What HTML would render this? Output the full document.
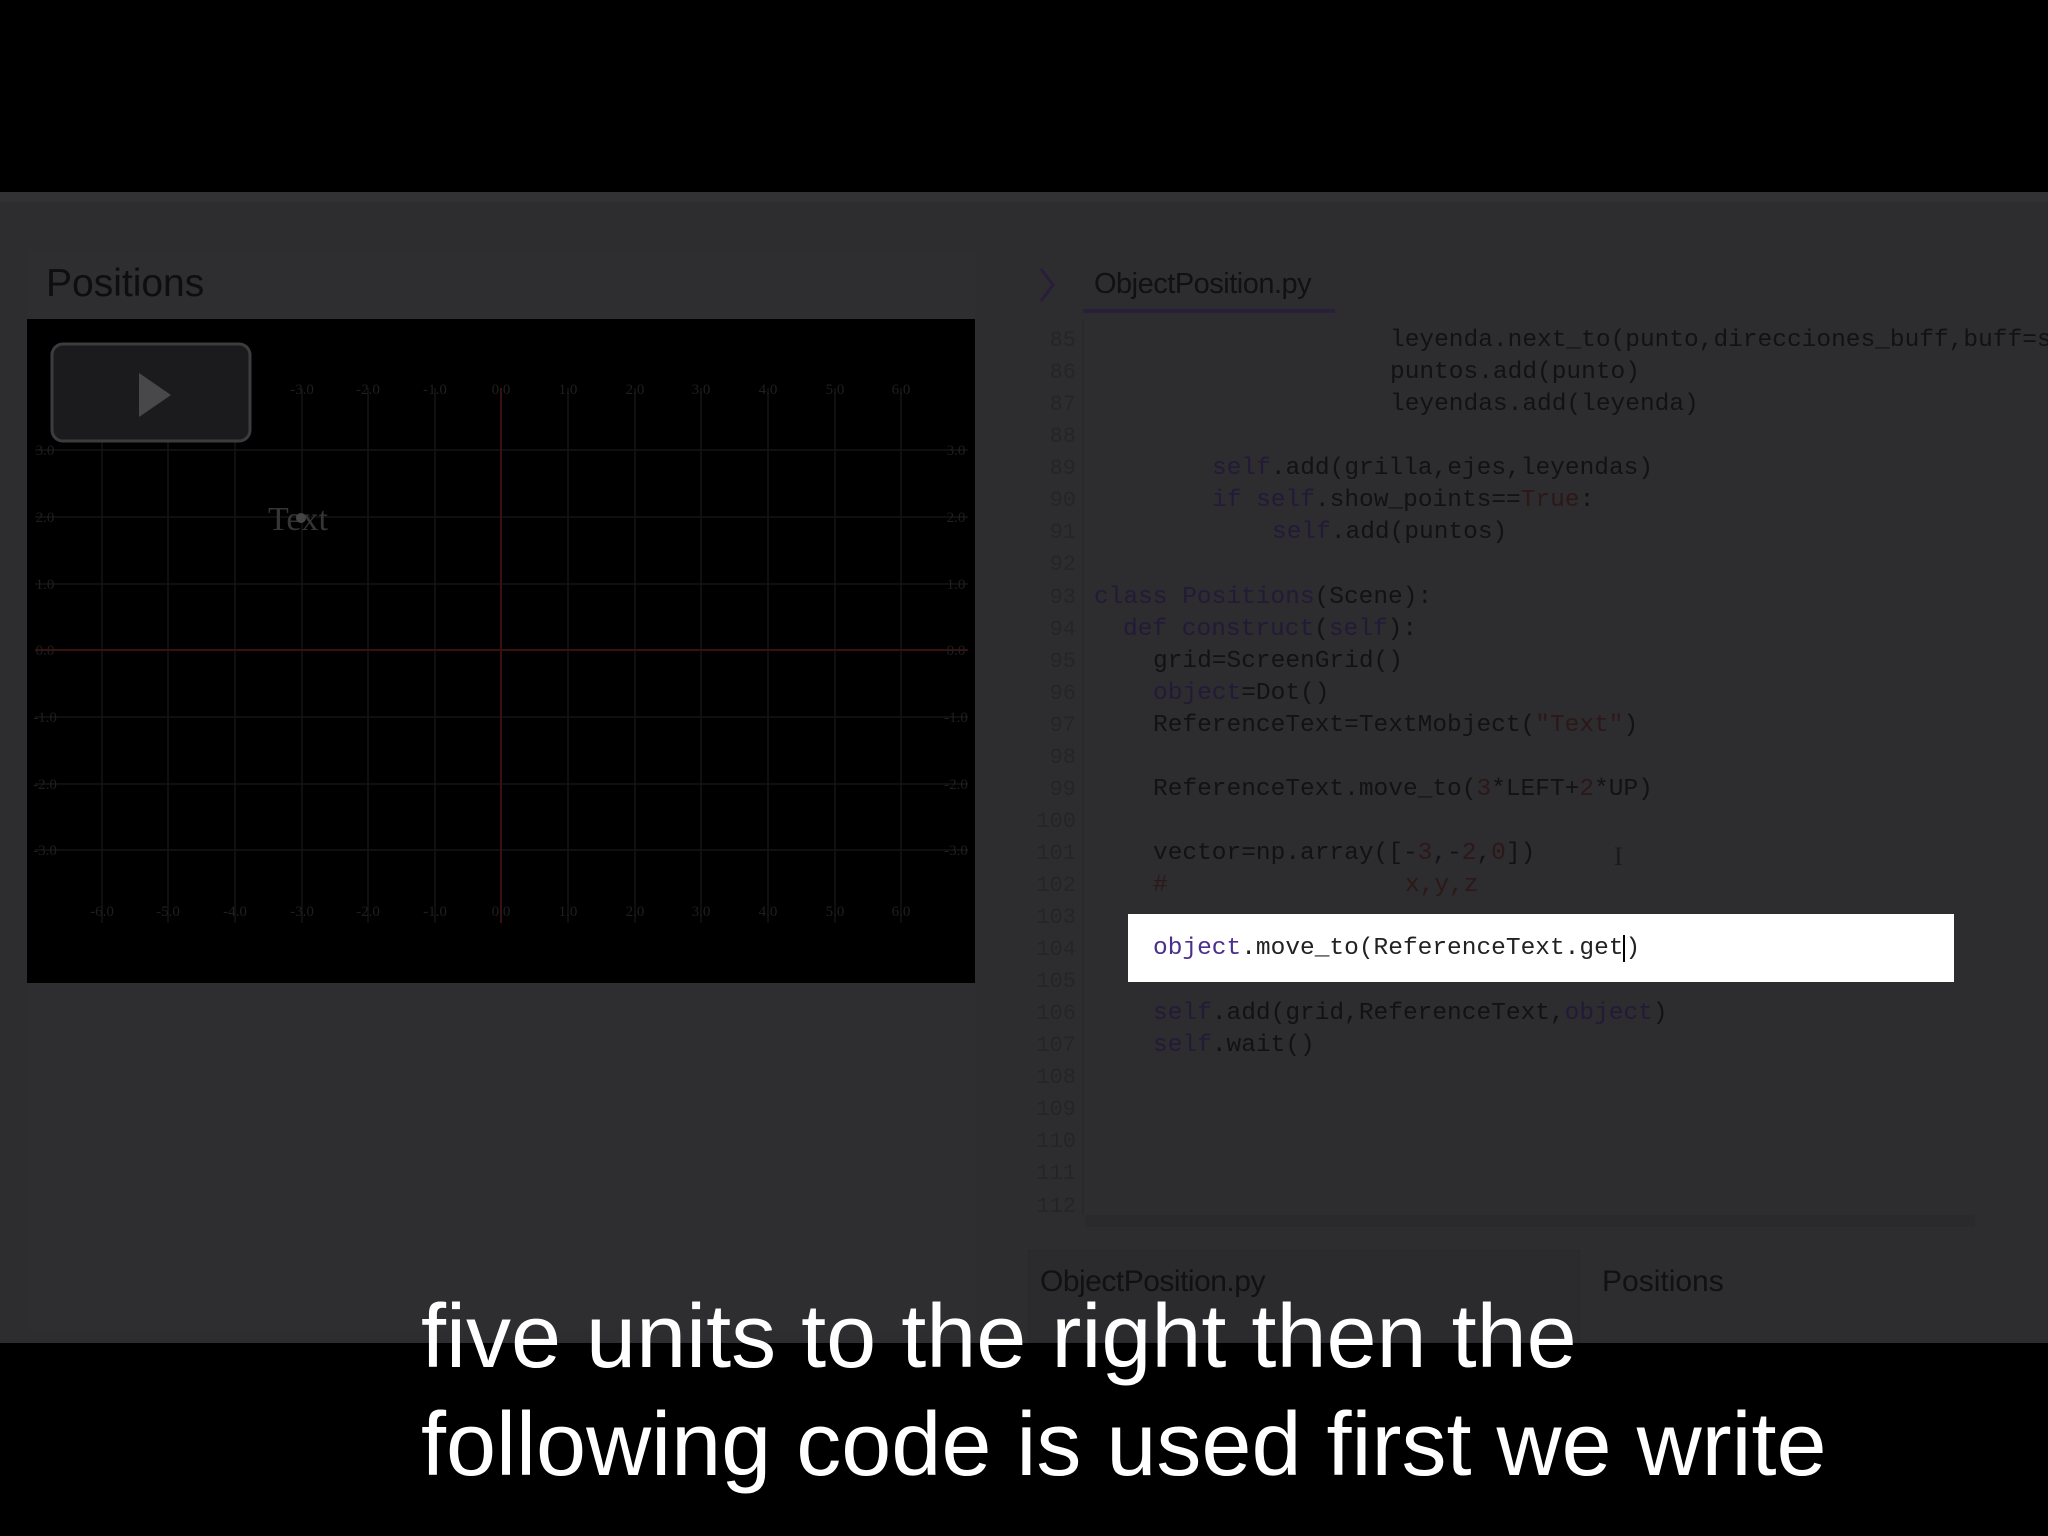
<!DOCTYPE html>
<html><head><meta charset="utf-8"><style>
*{margin:0;padding:0;box-sizing:border-box}
body{width:2048px;height:1536px;background:#000;position:relative;overflow:hidden;font-family:"Liberation Sans",sans-serif}
.abs{position:absolute}
.gray{left:0;top:192px;width:2048px;height:1151px;background:#2d2c2e}
.code{position:absolute;font-family:"Liberation Mono",monospace;font-size:24.5px;line-height:32px;height:32px;color:#121214;white-space:pre}
.ln{position:absolute;font-family:"Liberation Mono",monospace;font-size:22px;line-height:32px;color:#252527;width:50px;text-align:right;left:1026px}
.k{color:#231a38}.s{color:#2c1818}
.sub{position:absolute;left:421px;color:#fff;font-size:90px;white-space:nowrap}
</style></head><body>
<div class="abs gray"></div>
<div class="abs" style="left:0;top:192px;width:2048px;height:10px;background:#323133"></div>
<!-- left panel -->
<div class="abs" style="left:27px;top:250px;width:948px;height:1080px;background:#2e2d2f"></div>
<div class="abs" style="left:46px;top:262px;font-size:39px;color:#0e0e12">Positions</div>
<div class="abs" style="left:27px;top:319px;width:948px;height:664px;background:#000"></div>
<svg class="abs" style="left:27px;top:319px" width="948" height="664" viewBox="27 319 948 664">
<g stroke="#141414" stroke-width="1.5">
<line x1="102" y1="388" x2="102" y2="923"/><line x1="168" y1="388" x2="168" y2="923"/><line x1="235" y1="388" x2="235" y2="923"/><line x1="302" y1="388" x2="302" y2="923"/><line x1="368" y1="388" x2="368" y2="923"/><line x1="435" y1="388" x2="435" y2="923"/><line x1="568" y1="388" x2="568" y2="923"/><line x1="635" y1="388" x2="635" y2="923"/><line x1="701" y1="388" x2="701" y2="923"/><line x1="768" y1="388" x2="768" y2="923"/><line x1="835" y1="388" x2="835" y2="923"/><line x1="901" y1="388" x2="901" y2="923"/>
<line x1="35" y1="450" x2="968" y2="450"/><line x1="35" y1="517" x2="968" y2="517"/><line x1="35" y1="584" x2="968" y2="584"/><line x1="35" y1="717" x2="968" y2="717"/><line x1="35" y1="784" x2="968" y2="784"/><line x1="35" y1="850" x2="968" y2="850"/>
</g>
<g stroke="#3a1010" stroke-width="2"><line x1="501" y1="388" x2="501" y2="923"/><line x1="35" y1="650" x2="968" y2="650"/></g>
<g fill="#1f1f1f" font-family="Liberation Serif" font-size="15" text-anchor="middle">
<text x="302" y="394">-3.0</text><text x="368" y="394">-2.0</text><text x="435" y="394">-1.0</text><text x="501" y="394">0.0</text><text x="568" y="394">1.0</text><text x="635" y="394">2.0</text><text x="701" y="394">3.0</text><text x="768" y="394">4.0</text><text x="835" y="394">5.0</text><text x="901" y="394">6.0</text>
<text x="102" y="916">-6.0</text><text x="168" y="916">-5.0</text><text x="235" y="916">-4.0</text><text x="302" y="916">-3.0</text><text x="368" y="916">-2.0</text><text x="435" y="916">-1.0</text><text x="501" y="916">0.0</text><text x="568" y="916">1.0</text><text x="635" y="916">2.0</text><text x="701" y="916">3.0</text><text x="768" y="916">4.0</text><text x="835" y="916">5.0</text><text x="901" y="916">6.0</text>
<text x="45" y="455">3.0</text><text x="45" y="522">2.0</text><text x="45" y="589">1.0</text><text x="45" y="655">0.0</text><text x="45" y="722">-1.0</text><text x="45" y="789">-2.0</text><text x="45" y="855">-3.0</text>
<text x="956" y="455">3.0</text><text x="956" y="522">2.0</text><text x="956" y="589">1.0</text><text x="956" y="655">0.0</text><text x="956" y="722">-1.0</text><text x="956" y="789">-2.0</text><text x="956" y="855">-3.0</text>
</g>
<text x="268" y="530" fill="#353535" font-family="Liberation Serif" font-size="34">Text</text>
<circle cx="301" cy="518" r="5" fill="#444"/>
<rect x="52" y="344" width="198" height="97" rx="11" fill="#1b1b1d" stroke="#3c3c3e" stroke-width="3"/>
<path d="M139 373 L171 395 L139 417 Z" fill="#48484a"/>
</svg>
<!-- right editor -->
<svg class="abs" style="left:1036px;top:266px" width="24" height="38"><path d="M5 3 L17 19 L5 35" fill="none" stroke="#2a1d3c" stroke-width="3"/></svg>
<div class="abs" style="left:1094px;top:268px;font-size:29px;color:#111114;letter-spacing:-0.5px">ObjectPosition.py</div>
<div class="abs" style="left:1083px;top:309px;width:252px;height:4px;background:#2a1f3a"></div>
<div class="abs" style="left:1082px;top:320px;width:2px;height:895px;background:#29282a"></div>
<div class="ln" style="top:325px">85</div><div class="ln" style="top:357px">86</div><div class="ln" style="top:389px">87</div><div class="ln" style="top:421px">88</div><div class="ln" style="top:453px">89</div><div class="ln" style="top:485px">90</div><div class="ln" style="top:517px">91</div><div class="ln" style="top:549px">92</div><div class="ln" style="top:582px">93</div><div class="ln" style="top:614px">94</div><div class="ln" style="top:646px">95</div><div class="ln" style="top:678px">96</div><div class="ln" style="top:710px">97</div><div class="ln" style="top:742px">98</div><div class="ln" style="top:774px">99</div><div class="ln" style="top:806px">100</div><div class="ln" style="top:838px">101</div><div class="ln" style="top:870px">102</div><div class="ln" style="top:902px">103</div><div class="ln" style="top:934px">104</div><div class="ln" style="top:966px">105</div><div class="ln" style="top:998px">106</div><div class="ln" style="top:1030px">107</div><div class="ln" style="top:1062px">108</div><div class="ln" style="top:1094px">109</div><div class="ln" style="top:1126px">110</div><div class="ln" style="top:1158px">111</div><div class="ln" style="top:1191px">112</div>
<div class="code" style="left:1390px;top:325px">leyenda.next_to(punto,direcciones_buff,buff=s</div>
<div class="code" style="left:1390px;top:357px">puntos.add(punto)</div>
<div class="code" style="left:1390px;top:389px">leyendas.add(leyenda)</div>
<div class="code" style="left:1212px;top:453px"><span class="k">self</span>.add(grilla,ejes,leyendas)</div>
<div class="code" style="left:1212px;top:485px"><span class="k">if self</span>.show_points==<span class="s">True</span>:</div>
<div class="code" style="left:1272px;top:517px"><span class="k">self</span>.add(puntos)</div>
<div class="code" style="left:1094px;top:582px"><span class="k">class Positions</span>(Scene):</div>
<div class="code" style="left:1123px;top:614px"><span class="k">def construct</span>(<span class="k">self</span>):</div>
<div class="code" style="left:1153px;top:646px">grid=ScreenGrid()</div>
<div class="code" style="left:1153px;top:678px"><span class="k">object</span>=Dot()</div>
<div class="code" style="left:1153px;top:710px">ReferenceText=TextMobject(<span class="s">"Text"</span>)</div>
<div class="code" style="left:1153px;top:774px">ReferenceText.move_to(<span class="s">3</span>*LEFT+<span class="s">2</span>*UP)</div>
<div class="code" style="left:1153px;top:838px">vector=np.array([-<span class="s">3</span>,-<span class="s">2</span>,<span class="s">0</span>])</div>
<div class="code" style="left:1153px;top:870px"><span class="s">#</span></div>
<div class="code" style="left:1405px;top:870px"><span class="s">x,y,z</span></div>
<div class="code" style="left:1153px;top:998px"><span class="k">self</span>.add(grid,ReferenceText,<span class="k">object</span>)</div>
<div class="code" style="left:1153px;top:1030px"><span class="k">self</span>.wait()</div>
<div class="abs" style="left:1614px;top:842px;font-family:'Liberation Serif',serif;font-size:26px;color:#1a1a1a">I</div>
<div class="abs" style="left:1128px;top:914px;width:826px;height:68px;background:#fff"></div>
<div class="code" style="left:1153px;top:933px;color:#222"><span style="color:#4b2f8c">object</span>.move_to(ReferenceText.get<span style="border-left:2px solid #000"></span>)</div>
<div class="abs" style="left:1085px;top:1215px;width:890px;height:12px;background:#2a292b"></div>
<!-- bottom tabs -->
<div class="abs" style="left:1028px;top:1250px;width:552px;height:93px;background:#2b2a2c;border:1px solid #29282a"></div>
<div class="abs" style="left:1040px;top:1265px;font-size:30px;color:#111114;letter-spacing:-0.5px">ObjectPosition.py</div>
<div class="abs" style="left:1602px;top:1265px;font-size:30px;color:#111114">Positions</div>
<!-- subtitles -->
<div class="sub" style="top:1286px">five units to the right then the</div>
<div class="sub" style="top:1394px">following code is used first we write</div>
</body></html>
